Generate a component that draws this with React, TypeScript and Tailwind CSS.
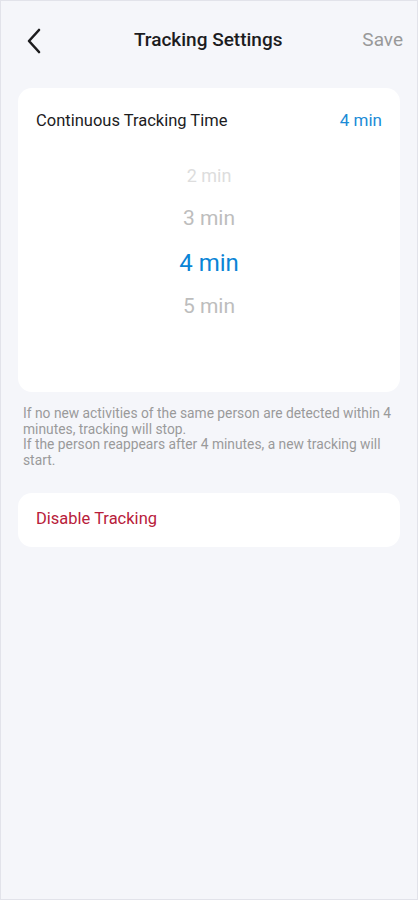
import React from "react";

export default function App() {
  const font = { fontFamily: "Roboto, 'Noto Sans', sans-serif" };
  return (
    <div
      className="w-[418px] h-[900px] bg-[#f5f6fa] border border-[#e2e3ea] flex flex-col overflow-hidden"
      style={font}
    >
      <div className="h-[79px] flex items-center justify-between px-[24px]">
        <svg width="16" height="26" viewBox="0 0 16 26" className="ml-[1px]">
          <path d="M13 2 L3 13 L13 24" fill="none" stroke="#1c1c1e" strokeWidth="2.6" strokeLinecap="round" strokeLinejoin="round" />
        </svg>
        <div className="text-[19px] text-[#1c1c1e] font-medium tracking-[0px] ml-[12px]">Tracking Settings</div>
        <div className="text-[19px] text-[#999999] -mr-[10px]">Save</div>
      </div>
      <div className="mx-[17px] mt-[8px] h-[304px] bg-white rounded-[14px] flex flex-col">
        <div className="flex items-center justify-between px-[18px] pt-[21px] h-[45px]">
          <div className="text-[16.5px] text-[#1c1c1e]">Continuous Tracking Time</div>
          <div className="text-[17px] text-[#1b8bd6]">4 min</div>
        </div>
        <div className="flex flex-col items-center mt-[28px]">
          <div className="h-[28px] flex items-center text-[18px] text-[#dddddd]">2 min</div>
          <div className="h-[44px] flex items-center text-[21px] text-[#bdbdbd] mt-[8px]">3 min</div>
          <div className="h-[44px] flex items-center text-[24px] text-[#0a84d6]">4 min</div>
          <div className="h-[44px] flex items-center text-[21px] text-[#bdbdbd]">5 min</div>
        </div>
      </div>
      <div className="px-[22px] pt-[14px] text-[13.8px] leading-[15.7px] text-[#9a9a9a]">
        If no new activities of the same person are detected within 4 minutes, tracking will stop.
        <br />
        If the person reappears after 4 minutes, a new tracking will start.
      </div>
      <div className="mx-[17px] mt-[24px] h-[54px] bg-white rounded-[14px] flex items-center px-[18px]">
        <div className="text-[16.5px] text-[#b8203a]">Disable Tracking</div>
      </div>
    </div>
  );
}
